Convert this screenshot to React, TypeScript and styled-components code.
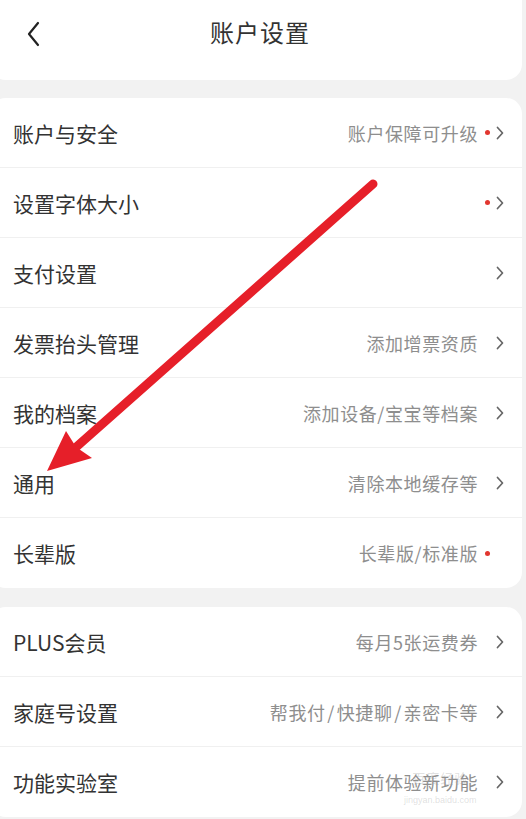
import React from "react";
import styled, { createGlobalStyle } from "styled-components";

const GlobalStyle = createGlobalStyle`
  html, body {
    margin: 0;
    padding: 0;
    background: #f2f2f2;
  }
  body {
    font-family: "Noto Sans CJK SC", "Noto Sans", sans-serif;
    color: #333;
    overflow: hidden;
  }
`;

type Item = {
  label: string;
  value?: string;
  dot?: boolean;
  arrow?: boolean;
};

const groupOne: Item[] = [
  { label: "账户与安全", value: "账户保障可升级", dot: true, arrow: true },
  { label: "设置字体大小", dot: true, arrow: true },
  { label: "支付设置", arrow: true },
  { label: "发票抬头管理", value: "添加增票资质", arrow: true },
  { label: "我的档案", value: "添加设备/宝宝等档案", arrow: true },
  { label: "通用", value: "清除本地缓存等", arrow: true },
  { label: "长辈版", value: "长辈版/标准版", dot: true },
];

const groupTwo: Item[] = [
  { label: "PLUS会员", value: "每月5张运费券", arrow: true },
  { label: "家庭号设置", value: "帮我付\u200a/\u200a快捷聊\u200a/\u200a亲密卡等", arrow: true },
  { label: "功能实验室", value: "提前体验新功能", arrow: true },
];

const Page = styled.div`
  position: relative;
  width: 532px;
  height: 819px;
  margin-left: -10px;
  background: #f2f2f2;
  overflow: hidden;
`;

const Card = styled.div<{ $gap: number }>`
  background: #fff;
  border-radius: 16px;
  margin-top: ${({ $gap }) => $gap}px;
  overflow: hidden;
`;

const HeaderCard = styled.div`
  background: #fff;
  border-radius: 0 0 16px 16px;
  height: 80px;
  display: flex;
  align-items: center;
  justify-content: center;
  position: relative;
`;

const BackButton = styled.div`
  position: absolute;
  left: 36px;
  top: 21px;
  width: 16px;
  height: 26px;
`;

const Title = styled.div`
  font-size: 24px;
  letter-spacing: 1px;
  color: #333;
  margin-top: -18px;
  margin-left: 8px;
`;

const Row = styled.div<{ $last: boolean }>`
  height: 70px;
  display: flex;
  align-items: center;
  padding-left: 23px;
  padding-right: 18px;
  border-bottom: ${({ $last }) => ($last ? "none" : "1.5px solid #f0f0f0")};
  box-sizing: border-box;
`;

const Label = styled.div`
  flex: 1;
  font-size: 21px;
  color: #333;
  white-space: nowrap;
`;

const Value = styled.div`
  font-size: 18px;
  letter-spacing: 0.6px;
  color: #8e8e8e;
  white-space: nowrap;
`;

const Tail = styled.div`
  width: 26px;
  display: flex;
  align-items: center;
`;

const Dot = styled.span<{ $show: boolean }>`
  width: 5px;
  height: 5px;
  border-radius: 50%;
  background: ${({ $show }) => ($show ? "#e2362f" : "transparent")};
  margin-left: 7px;
  margin-right: 6px;
`;

const Overlay = styled.svg`
  position: absolute;
  left: 10px;
  top: 0;
  pointer-events: none;
`;

const Watermark = styled.div`
  position: absolute;
  left: 414px;
  top: 770px;
  display: flex;
  flex-direction: column;
  align-items: center;
  color: rgba(150, 150, 150, 0.3);
  pointer-events: none;
`;

const MarkTop = styled.div`
  font-size: 13px;
  letter-spacing: 1px;
  line-height: 16px;
`;

const MarkBottom = styled.div`
  font-family: "Liberation Sans", sans-serif;
  font-size: 9px;
  line-height: 12px;
  margin-top: 8px;
`;

const Chevron = () => (
  <svg width="8" height="14" viewBox="0 0 8 14">
    <path d="M1.5 1.5 L6.5 7 L1.5 12.5" fill="none" stroke="#666" strokeWidth="1.7" strokeLinecap="round" strokeLinejoin="round" />
  </svg>
);

const Group = ({ items, gap }: { items: Item[]; gap: number }) => (
  <Card $gap={gap}>
    {items.map((item, i) => (
      <Row key={item.label} $last={i === items.length - 1}>
        <Label>{item.label}</Label>
        {item.value && <Value>{item.value}</Value>}
        <Tail>
          <Dot $show={!!item.dot} />
          {item.arrow && <Chevron />}
        </Tail>
      </Row>
    ))}
  </Card>
);

export default function App() {
  return (
    <Page>
      <GlobalStyle />
      <HeaderCard>
        <BackButton>
          <svg width="16" height="26" viewBox="0 0 16 26">
            <path d="M12 2 L3 13 L12 24" fill="none" stroke="#222" strokeWidth="2.2" strokeLinecap="round" strokeLinejoin="round" />
          </svg>
        </BackButton>
        <Title>账户设置</Title>
      </HeaderCard>
      <Group items={groupOne} gap={18} />
      <Group items={groupTwo} gap={19} />
      <Overlay width="526" height="819" viewBox="0 0 526 819">
        <line x1="373" y1="184" x2="74" y2="449" stroke="#e61f29" strokeWidth="9" strokeLinecap="round" />
        <polygon points="47,471 66,431 76,447 92,458" fill="#e61f29" />
      </Overlay>
      <Watermark>
        <MarkTop>百度经验</MarkTop>
        <MarkBottom>jingyan.baidu.com</MarkBottom>
      </Watermark>
    </Page>
  );
}
